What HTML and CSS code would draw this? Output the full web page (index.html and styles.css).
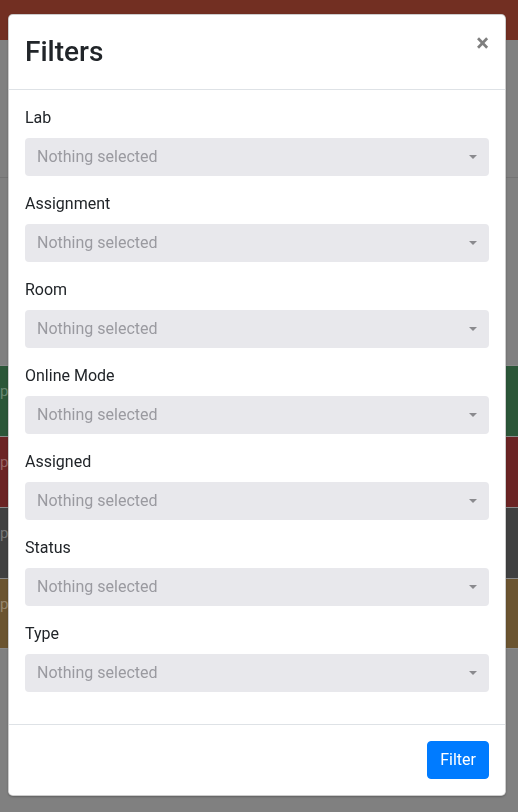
FILE: index.html
```html
<!DOCTYPE html>
<html lang="en">
<head>
<meta charset="utf-8">
<title>Filters</title>
<link rel="stylesheet" href="styles.css">
</head>
<body>
<div class="page">
  <div class="topbar"></div>
  <div class="area"></div>
  <div class="divline"></div>
  <div class="area2"></div>
  <div class="row row-green"><span>pen</span></div>
  <div class="row row-red"><span>pen</span></div>
  <div class="row row-dark"><span>pen</span></div>
  <div class="row row-gold"><span>pen</span></div>
</div>

<div class="modal">
  <div class="modal-header">
    <h3 class="modal-title">Filters</h3>
    <button class="close" type="button">&times;</button>
  </div>
  <div class="modal-body">
    <div class="form-group">
      <label class="lbl">Lab</label>
      <div class="select"><span class="placeholder">Nothing selected</span><span class="caret"></span></div>
    </div>
    <div class="form-group">
      <label class="lbl">Assignment</label>
      <div class="select"><span class="placeholder">Nothing selected</span><span class="caret"></span></div>
    </div>
    <div class="form-group">
      <label class="lbl">Room</label>
      <div class="select"><span class="placeholder">Nothing selected</span><span class="caret"></span></div>
    </div>
    <div class="form-group">
      <label class="lbl">Online Mode</label>
      <div class="select"><span class="placeholder">Nothing selected</span><span class="caret"></span></div>
    </div>
    <div class="form-group">
      <label class="lbl">Assigned</label>
      <div class="select"><span class="placeholder">Nothing selected</span><span class="caret"></span></div>
    </div>
    <div class="form-group">
      <label class="lbl">Status</label>
      <div class="select"><span class="placeholder">Nothing selected</span><span class="caret"></span></div>
    </div>
    <div class="form-group">
      <label class="lbl">Type</label>
      <div class="select"><span class="placeholder">Nothing selected</span><span class="caret"></span></div>
    </div>
  </div>
  <div class="modal-footer">
    <button class="btn" type="button">Filter</button>
  </div>
</div>
</body>
</html>
```

FILE: styles.css
```css
* { box-sizing: border-box; }
html, body {
  margin: 0;
  padding: 0;
  height: 100%;
  overflow: hidden;
}
body {
  background: #808080;
  font-family: Roboto, "Liberation Sans", Arial, sans-serif;
  color: #212529;
}
.page {
  display: flex;
  flex-direction: column;
}
.topbar {
  height: 40px;
  background: #722f22;
}
.area {
  height: 137px;
  background: #808080;
}
.divline {
  height: 1px;
  background: #747474;
}
.area2 {
  height: 187px;
  background: #808080;
}
.row {
  height: 71px;
  border-top: 1px solid #8a8a8a;
  display: flex;
  align-items: center;
  font-size: 15px;
  color: rgba(255,255,255,0.3);
}
.row span { margin-left: 0; margin-top: -20px; }
.row-green { background: #2b5638; }
.row-red { background: #6b2424; }
.row-dark { background: #404040; }
.row-gold { background: #6b5430; border-bottom: 1px solid #8a8a8a; }

.modal {
  position: fixed;
  left: 8px;
  top: 14px;
  width: 498px;
  background: #fff;
  border: 1px solid rgba(0,0,0,0.2);
  border-radius: 4.8px;
  box-shadow: 0 1px 2px rgba(0,0,0,0.25);
  display: flex;
  flex-direction: column;
}
.modal-header {
  display: flex;
  align-items: flex-start;
  justify-content: space-between;
  padding: 16px;
  border-bottom: 1px solid #dee2e6;
}
.modal-title {
  margin: 0;
  font-size: 28px;
  font-weight: 500;
  line-height: 42px;
  color: #212529;
}
.close {
  background: transparent;
  border: 0;
  padding: 16px;
  margin: -16px -16px -16px auto;
  font-family: Roboto, "Liberation Sans", Arial, sans-serif;
  font-size: 24px;
  font-weight: 700;
  line-height: 1;
  color: #000;
  opacity: 0.5;
  cursor: pointer;
}
.modal-body {
  padding: 16px;
}
.form-group {
  margin-bottom: 16px;
  display: flex;
  flex-direction: column;
}
.lbl {
  font-size: 16px;
  line-height: 24px;
  margin-bottom: 8px;
  color: #212529;
}
.select {
  height: 38px;
  background: #e8e8ec;
  border-radius: 4px;
  padding: 0 12px;
  display: flex;
  align-items: center;
  justify-content: space-between;
}
.placeholder {
  font-size: 16px;
  line-height: 24px;
  color: #9a9aa0;
}
.caret {
  width: 0;
  height: 0;
  border-top: 4.8px solid #8a8a8e;
  border-left: 4.8px solid transparent;
  border-right: 4.8px solid transparent;
}
.modal-footer {
  display: flex;
  justify-content: flex-end;
  align-items: center;
  padding: 12px;
  border-top: 1px solid #dee2e6;
}
.btn {
  margin: 4px;
  font-family: Roboto, "Liberation Sans", Arial, sans-serif;
  font-size: 16px;
  line-height: 24px;
  padding: 6px 12px;
  border: 1px solid #007bff;
  background: #007bff;
  color: #fff;
  border-radius: 4px;
  cursor: pointer;
}
```
